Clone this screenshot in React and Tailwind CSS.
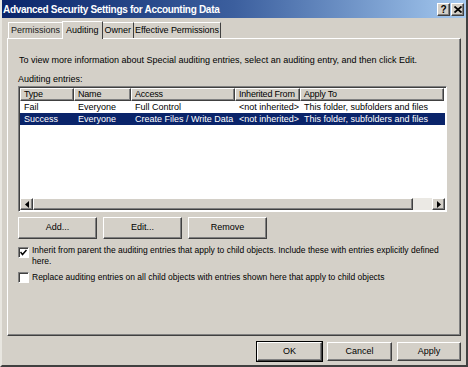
import React from 'react'

const raised = 'border border-t-white border-l-white border-r-[#404040] border-b-[#404040] shadow-[inset_-1px_-1px_0_#808080]'
const sunken = 'border border-t-[#808080] border-l-[#808080] border-r-white border-b-white shadow-[inset_1px_1px_0_#404040]'

const cols = [
  { label: 'Type', w: 'w-[54px]' },
  { label: 'Name', w: 'w-[57px]' },
  { label: 'Access', w: 'w-[104px]' },
  { label: 'Inherited From', w: 'w-[65px]' },
  { label: 'Apply To', w: 'w-[144px]' },
]

const rows = [
  ['Fail', 'Everyone', 'Full Control', '<not inherited>', 'This folder, subfolders and files'],
  ['Success', 'Everyone', 'Create Files / Write Data', '<not inherited>', 'This folder, subfolders and files'],
]

function Btn({ children, className = '' }) {
  return (
    <div className={`flex items-center justify-center bg-[#d4d0c8] text-black ${raised} ${className}`}>
      {children}
    </div>
  )
}

function Arrow({ dir }) {
  return (
    <div className={`w-[13px] h-[12px] flex items-center justify-center bg-[#d4d0c8] ${raised}`}>
      <svg width="4" height="7" viewBox="0 0 4 7">
        {dir === 'left' ? <polygon points="4,0 4,7 0,3.5" fill="#000" /> : <polygon points="0,0 0,7 4,3.5" fill="#000" />}
      </svg>
    </div>
  )
}

export default function App() {
  return (
    <div className="w-[468px] h-[367px] bg-[#d4d0c8] overflow-hidden font-['Liberation_Sans',Arial,sans-serif] text-[9px] text-black border-l-2 border-l-[#e8e6e0] border-r-2 border-r-[#404040] border-b-2 border-b-[#404040] flex flex-col">
      {/* Title bar */}
      <div className="h-[18px] shrink-0 flex items-center justify-between bg-gradient-to-r from-[#0a246a] via-[#3c5f9e] to-[#a6caf0] pl-[1px] pr-[2px]">
        <div className="text-white font-bold text-[10px] tracking-[-0.3px]">Advanced Security Settings for Accounting Data</div>
        <div className="flex gap-[1px]">
          <Btn className="w-[13px] h-[13px] font-bold text-[10px]">?</Btn>
          <Btn className="w-[13px] h-[13px]">
            <svg width="8" height="7" viewBox="0 0 8 7"><path d="M0.5 0.5 L7.5 6.5 M7.5 0.5 L0.5 6.5" stroke="#000" strokeWidth="1.8" /></svg>
          </Btn>
        </div>
      </div>

      {/* Tabs */}
      <div className="flex items-end mt-[2px] pl-[6px] h-[18px] shrink-0">
        <div className="h-[16px] px-[2px] flex items-center border-t border-l border-t-white border-l-white text-[#202020]">Permissions</div>
        <div className="h-[18px] px-[3px] flex items-start pt-[2px] border-t border-l border-r border-t-white border-l-white border-r-[#404040] relative -mb-[1px] bg-[#d4d0c8] z-10">Auditing</div>
        <div className="h-[16px] px-[2px] flex items-center border-t border-r border-t-white border-r-[#404040]">Owner</div>
        <div className="h-[16px] px-[1px] flex items-center border-t border-r border-t-white border-r-[#404040] tracking-[-0.1px]">Effective Permissions</div>
      </div>

      {/* Panel */}
      <div className="mx-[5px] h-[298px] shrink-0 border border-t-white border-l-white border-r-[#404040] border-b-[#404040] shadow-[inset_-1px_-1px_0_#808080] pl-[10px] pr-[13px] pt-[16px]">
        <div className="h-[11px] leading-[11px] pl-[1px]">To view more information about Special auditing entries, select an auditing entry, and then click Edit.</div>
        <div className="mt-[8px] h-[11px] leading-[11px]">Auditing entries:</div>
        <div className={`mt-[1px] h-[126px] bg-white flex flex-col ${sunken} p-[1px]`}>
          <div className="flex h-[13px] shrink-0">
            {cols.map((c) => (
              <div key={c.label} className={`${c.w} shrink-0 h-[13px] leading-[11px] pl-[3px] tracking-[-0.2px] bg-[#d4d0c8] ${raised} overflow-hidden whitespace-nowrap`}>{c.label}</div>
            ))}
          </div>
          {rows.map((r, i) => (
            <div key={i} className={`flex h-[12px] leading-[12px] shrink-0 ${i === 1 ? 'bg-[#0a246a] text-white' : ''}`}>
              {r.map((cell, j) => (
                <div key={j} className={`${cols[j].w} shrink-0 pl-[4px] whitespace-nowrap overflow-hidden`}>{cell}</div>
              ))}
            </div>
          ))}
          <div className="flex-1" />
          <div className="flex h-[12px] shrink-0 bg-[#ebe9e4]">
            <Arrow dir="left" />
            <div className={`w-[380px] h-[12px] bg-[#d4d0c8] ${raised}`} />
            <div className="flex-1" />
            <Arrow dir="right" />
          </div>
        </div>

        <div className="flex gap-[6px] mt-[5px]">
          <Btn className="w-[79px] h-[22px]">Add...</Btn>
          <Btn className="w-[79px] h-[22px]">Edit...</Btn>
          <Btn className="w-[79px] h-[22px]">Remove</Btn>
        </div>

        <div className="flex mt-[6px] text-[8.5px]">
          <div className={`w-[11px] h-[11px] mt-[2px] shrink-0 bg-white flex items-center justify-center ${sunken}`}>
            <svg width="7" height="7" viewBox="0 0 7 7"><path d="M0.5 3 L2.5 5.5 L6.5 1" stroke="#000" strokeWidth="1.5" fill="none" /></svg>
          </div>
          <div className="ml-[3px] leading-[11px]">Inherit from parent the auditing entries that apply to child objects. Include these with entries explicitly defined here.</div>
        </div>

        <div className="flex mt-[5px] items-center text-[8.5px]">
          <div className={`w-[11px] h-[11px] shrink-0 bg-white ${sunken}`} />
          <div className="ml-[3px] leading-[11px]">Replace auditing entries on all child objects with entries shown here that apply to child objects</div>
        </div>
      </div>

      {/* Bottom buttons */}
      <div className="flex justify-end gap-[5px] mt-[6px] pr-[5px]">
        <Btn className="w-[65px] h-[19px] outline outline-1 outline-black">OK</Btn>
        <Btn className="w-[65px] h-[19px]">Cancel</Btn>
        <Btn className="w-[64px] h-[19px]">Apply</Btn>
      </div>
    </div>
  )
}
